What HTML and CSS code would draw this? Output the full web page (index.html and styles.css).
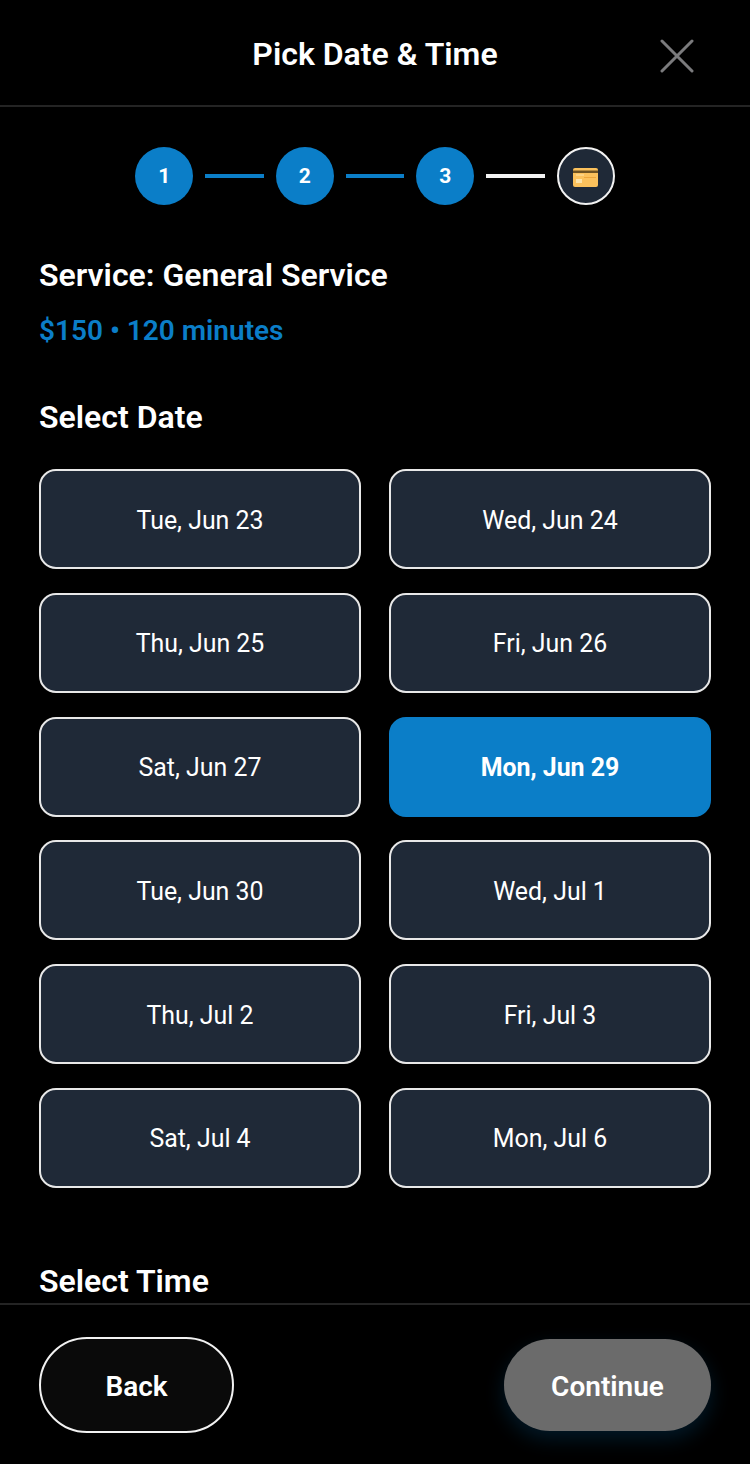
FILE: index.html
```html
<!DOCTYPE html>
<html lang="en">
<head>
    <meta charset="UTF-8">
    <meta name="viewport" content="width=device-width, initial-scale=1.0">
    <title>Pick Date &amp; Time</title>
    <link rel="stylesheet" href="styles.css">
</head>
<body>
    <div class="screen">
        <header class="top-bar">
            <h1>Pick Date &amp; Time</h1>
            <button class="close-btn" aria-label="Close">
                <svg width="34" height="34" viewBox="0 0 34 34">
                    <path d="M2 2 L32 32 M32 2 L2 32" stroke="#7b7b7d" stroke-width="3" fill="none" stroke-linecap="round"/>
                </svg>
            </button>
        </header>

        <main class="content">
            <!-- steps -->
            <div class="steps">
                <div class="step done">1</div>
                <div class="step-line done"></div>
                <div class="step done">2</div>
                <div class="step-line done"></div>
                <div class="step done">3</div>
                <div class="step-line"></div>
                <div class="step pending">
                    <svg class="card-icon" width="25" height="19" viewBox="0 0 25 19">
                        <rect x="0" y="0" width="25" height="19" rx="2" fill="#fbc15c"/>
                        <rect x="0" y="2.5" width="25" height="2.5" fill="#6e5222"/>
                        <rect x="3" y="6.5" width="8" height="1" fill="#fde3a8"/>
                        <rect x="3" y="11" width="6" height="4" fill="#fde3a8"/>
                        <rect x="11" y="9" width="12" height="1" fill="#eda63c"/>
                    </svg>
                </div>
            </div>

            <h2 class="service-name">Service: General Service</h2>
            <p class="service-meta">$150 • 120 minutes</p>

            <h3 class="section-title">Select Date</h3>
            <div class="date-grid">
                <button class="date-btn">Tue, Jun 23</button>
                <button class="date-btn">Wed, Jun 24</button>
                <button class="date-btn">Thu, Jun 25</button>
                <button class="date-btn">Fri, Jun 26</button>
                <button class="date-btn">Sat, Jun 27</button>
                <button class="date-btn selected">Mon, Jun 29</button>
                <button class="date-btn">Tue, Jun 30</button>
                <button class="date-btn">Wed, Jul 1</button>
                <button class="date-btn">Thu, Jul 2</button>
                <button class="date-btn">Fri, Jul 3</button>
                <button class="date-btn">Sat, Jul 4</button>
                <button class="date-btn">Mon, Jul 6</button>
            </div>

            <h3 class="section-title time-title">Select Time</h3>
        </main>

        <footer class="bottom-bar">
            <button class="back-btn">Back</button>
            <button class="continue-btn">Continue</button>
        </footer>
    </div>
</body>
</html>
```

FILE: styles.css
```css
* {
    box-sizing: border-box;
}
html, body {
    margin: 0;
    padding: 0;
    background: #000;
}
body {
    font-family: Roboto, "Liberation Sans", sans-serif;
    color: #fff;
}
button {
    font-family: inherit;
    color: #fff;
    cursor: pointer;
}
.screen {
    display: flex;
    flex-direction: column;
    height: 1464px;
    overflow: hidden;
}
.top-bar {
    flex: none;
    height: 107px;
    display: flex;
    align-items: center;
    justify-content: center;
    position: relative;
    border-bottom: 2px solid #242424;
}
.top-bar h1 {
    margin: 3px 0 0;
    font-size: 32px;
    font-weight: 600;
}
.close-btn {
    position: absolute;
    top: 39px;
    right: 56px;
    width: 34px;
    height: 34px;
    padding: 0;
    border: 0;
    background: none;
    display: flex;
}
.content {
    flex: 1;
    min-height: 0;
    overflow: hidden;
    padding: 40px 39px 0;
}
.steps {
    display: flex;
    align-items: center;
    justify-content: center;
    gap: 12px;
}
.step {
    width: 58px;
    height: 58px;
    border-radius: 50%;
    display: flex;
    align-items: center;
    justify-content: center;
    font-size: 21px;
    font-weight: 700;
}
.step.done {
    background: #0b7ec8;
}
.step.pending {
    background: #1f2937;
    border: 2px solid #f2f2f2;
}
.card-icon {
    margin-top: 2px;
}
.step-line {
    width: 58.5px;
    height: 4px;
    background: #f2f2f2;
}
.step-line.done {
    background: #0b7ec8;
}
.service-name {
    margin: 51px 0 0;
    font-size: 32px;
    line-height: 38px;
    font-weight: 600;
}
.service-meta {
    margin: 19px 0 0;
    font-size: 28px;
    line-height: 36px;
    font-weight: 600;
    color: #0b7ec8;
}
.section-title {
    margin: 49px 0 0;
    font-size: 32px;
    line-height: 38px;
    font-weight: 600;
}
.date-grid {
    display: grid;
    grid-template-columns: 322px 322px;
    column-gap: 28px;
    row-gap: 23.7px;
    margin-top: 33.3px;
}
.date-btn {
    height: 100px;
    padding: 2px 0 0;
    border: 2px solid #e8e8e8;
    border-radius: 17px;
    background: #1f2937;
    font-size: 24.9px;
}
.date-btn.selected {
    background: #0b7ec8;
    border-color: #0b7ec8;
    font-weight: 700;
}
.time-title {
    margin-top: 74px;
}
.bottom-bar {
    flex: none;
    height: 161px;
    display: flex;
    align-items: center;
    justify-content: space-between;
    padding: 0 39px;
    border-top: 2px solid #242424;
}
.back-btn {
    width: 195px;
    height: 96px;
    padding-top: 4px;
    border: 2px solid #f2f2f2;
    border-radius: 48px;
    background: #0a0a0a;
    font-size: 28px;
    font-weight: 600;
}
.continue-btn {
    width: 207px;
    height: 92px;
    padding-top: 4px;
    border: 0;
    border-radius: 46px;
    background: #6b6b6b;
    font-size: 28px;
    font-weight: 600;
    box-shadow: 0 8px 20px rgba(11, 126, 200, 0.2);
}
```
